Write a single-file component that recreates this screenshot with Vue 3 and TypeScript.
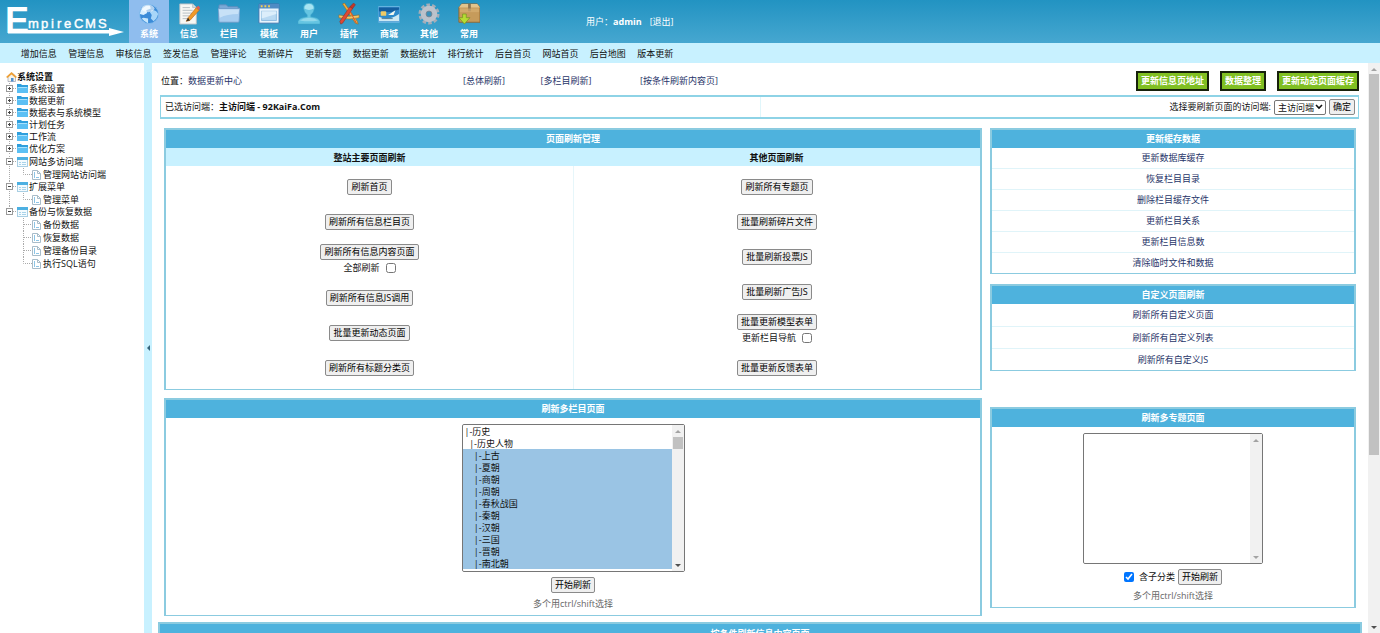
<script setup lang="ts">
import { ref } from 'vue'

interface TreeRow {
  text: string
  kind: 'closed' | 'open' | 'leaf'
  trunk: boolean
  last?: boolean
}

interface Action {
  text: string
  option?: string
}

const tabs = ['系统', '信息', '栏目', '模板', '用户', '插件', '商城', '其他', '常用']
const activeTab = ref(0)

const quickLinks = [
  '增加信息', '管理信息', '审核信息', '签发信息', '管理评论', '更新碎片', '更新专题',
  '数据更新', '数据统计', '排行统计', '后台首页', '网站首页', '后台地图', '版本更新',
]

const tree: TreeRow[] = [
  { text: '系统设置', kind: 'closed', trunk: true },
  { text: '数据更新', kind: 'closed', trunk: true },
  { text: '数据表与系统模型', kind: 'closed', trunk: true },
  { text: '计划任务', kind: 'closed', trunk: true },
  { text: '工作流', kind: 'closed', trunk: true },
  { text: '优化方案', kind: 'closed', trunk: true },
  { text: '网站多访问端', kind: 'open', trunk: true },
  { text: '管理网站访问端', kind: 'leaf', trunk: true, last: true },
  { text: '扩展菜单', kind: 'open', trunk: true },
  { text: '管理菜单', kind: 'leaf', trunk: true, last: true },
  { text: '备份与恢复数据', kind: 'open', trunk: false },
  { text: '备份数据', kind: 'leaf', trunk: false },
  { text: '恢复数据', kind: 'leaf', trunk: false },
  { text: '管理备份目录', kind: 'leaf', trunk: false },
  { text: '执行SQL语句', kind: 'leaf', trunk: false, last: true },
]

const siteActions: Action[] = [
  { text: '刷新首页' },
  { text: '刷新所有信息栏目页' },
  { text: '刷新所有信息内容页面', option: '全部刷新' },
  { text: '刷新所有信息JS调用' },
  { text: '批量更新动态页面' },
  { text: '刷新所有标题分类页' },
]

const otherActions: Action[] = [
  { text: '刷新所有专题页' },
  { text: '批量刷新碎片文件' },
  { text: '批量刷新投票JS' },
  { text: '批量刷新广告JS' },
  { text: '批量更新模型表单', option: '更新栏目导航' },
  { text: '批量更新反馈表单' },
]

const cacheLinks = ['更新数据库缓存', '恢复栏目目录', '删除栏目缓存文件', '更新栏目关系', '更新栏目信息数', '清除临时文件和数据']
const customLinks = ['刷新所有自定义页面', '刷新所有自定义列表', '刷新所有自定义JS']

const pad = '\u00a0\u00a0'
const columns = [
  '|-历史',
  pad + '|-历史人物',
  ...['上古', '夏朝', '商朝', '周朝', '春秋战国', '秦朝', '汉朝', '三国', '晋朝', '南北朝'].map((n) => pad + pad + '|-' + n),
]
const chosen = ref<string[]>(columns.slice(2))
const topics = ref<string[]>([])
const withChildren = ref(true)
</script>

<template>
  <div class="app">
    <header class="top">
      <svg class="logo" viewBox="0 0 129 43" role="img" aria-label="EmpireCMS">
        <text x="5" y="33" class="logo-cap">E</text>
        <text x="28 41 51 57 64 74 85 98" y="28" class="logo-rest">mpireCMS</text>
        <path d="M8 30H109V28L124 32L109 36V33.500H8Z" fill="#fff" />
      </svg>
      <nav class="tabs">
        <button v-for="(tab, i) in tabs" :key="tab" type="button" class="tab" :class="{ active: i === activeTab }" @click="activeTab = i">
          <svg class="tab-icon" viewBox="0 0 24 24" aria-hidden="true">
            <g v-if="i === 0">
              <circle cx="12" cy="12" r="10.5" fill="#3b8bd8" stroke="#86bdee" />
              <path d="M3 8Q7 2 13 3L14 6L9 8L10 11L6 13L2 12Z" fill="#d9efff" />
              <path d="M15 8Q20 7 22 12L20 17L17 20L14 17L15 13L13 10Z" fill="#a8d6f8" />
              <path d="M6 16L11 17L11 22Q7 21 4 17Z" fill="#c6e6fc" />
              <ellipse cx="11" cy="6" rx="7" ry="4" fill="#fff" opacity=".6" />
            </g>
            <g v-else-if="i === 1">
              <path d="M2 1H16L20 5V23H2Z" fill="#f7f7f4" stroke="#b8c0c4" />
              <path d="M16 1V5H20" fill="#d5dbde" stroke="#b8c0c4" />
              <path d="M5 5H13M5 8H16M5 11H15M5 14H12M5 17H11" stroke="#b4bcc1" />
              <path d="M9 20L11 16L20 5L23 8L13 19Z" fill="#f09a28" stroke="#b8681c" stroke-width=".7" />
              <path d="M20 5L22 3L24 5L23 8Z" fill="#e25d55" />
              <path d="M9 20L11 16L13 19Z" fill="#35322d" />
            </g>
            <g v-else-if="i === 2">
              <path d="M1 3Q1 2 2 2H9L11 4H21Q22 4 22 5V19H1Z" fill="#7ca9d6" stroke="#5b8cbc" />
              <path d="M0 6H24L23 20Q23 21 22 21H2Q1 21 1 20Z" fill="#a7cdf0" stroke="#6c9bc8" />
              <path d="M1 7H23L22 12Q10 12 2 16Z" fill="#d0e6f9" opacity=".8" />
            </g>
            <g v-else-if="i === 3">
              <rect x="1" y="1" width="22" height="21" rx="1" fill="#e9f4fd" stroke="#3e73ad" />
              <rect x="1" y="1" width="22" height="5" fill="#4f8bc4" />
              <path d="M3 3.5H5M7 3.5H9M11 3.5H13" stroke="#f4cf53" stroke-width="2" />
              <rect x="4" y="9" width="16" height="10" fill="#b9d9f2" stroke="#8ab9de" />
              <path d="M4 9H20V12L4 17Z" fill="#dceefb" />
            </g>
            <g v-else-if="i === 4">
              <path d="M12 0Q18 0 18 6Q17 11 14 13V15Q23 16 24 20V23H0V20Q1 16 10 15V13Q7 11 6 6Q6 0 12 0Z" fill="#65c5e2" stroke="#3aa5c8" stroke-width=".6" />
              <path d="M12 1Q17 1 17 6Q12 9 7 6Q7 1 12 1Z" fill="#a7e4f2" />
              <path d="M2 19Q6 16 12 16Q18 16 22 19Q12 21 2 19Z" fill="#93d9eb" />
            </g>
            <g v-else-if="i === 5">
              <path d="M5 1L7 0L21 20L22 23L19 22Z" fill="#f2b23c" stroke="#9b611d" stroke-width=".6" />
              <path d="M1 13Q12 16 23 13V16Q12 19 1 16Z" fill="#f3c765" stroke="#9b611d" stroke-width=".6" />
              <path d="M3 23L2 20L13 4L16 6L5 22Z" fill="#dd4935" stroke="#8f2d20" stroke-width=".6" />
              <path d="M13 4L17 0L19 2L16 6Z" fill="#c43527" stroke="#792b25" stroke-width=".5" />
              <path d="M11 5L20 22" stroke="#d84931" />
            </g>
            <g v-else-if="i === 6">
              <rect x="0" y="4" width="24" height="17" rx="1" fill="#2e8acb" stroke="#75bce7" />
              <path d="M1 15Q11 20 23 12V20H1Z" fill="#cde8f3" />
              <path d="M1 5H23V7Q11 12 1 9Z" fill="#145e9f" />
              <rect x="3" y="9" width="6" height="5" rx="1" fill="#efca65" />
              <path d="M11 13L19 8L17 13Z" fill="#f6f8ef" />
              <path d="M4 17H16" stroke="#4d7892" />
            </g>
            <g v-else-if="i === 7">
              <circle cx="12" cy="12" r="9.5" fill="none" stroke="#a5adb8" stroke-width="4" stroke-dasharray="3.7 2.27" />
              <circle cx="12" cy="12" r="6" fill="none" stroke="#bcc2cb" stroke-width="6" />
              <circle cx="12" cy="12" r="3.2" fill="#3a91bb" stroke="#7d8793" />
            </g>
            <g v-else>
              <path d="M1 5L4 1H21L24 5V21H1Z" fill="#c69b5b" stroke="#8c6733" />
              <path d="M1 5L4 1H21L24 5Z" fill="#e2c48d" />
              <path d="M11 1H14V9H11Z" fill="#8b7350" />
              <path d="M2 6H23V10H2Z" fill="#d8b276" opacity=".6" />
              <path d="M5 12H9V16H13L7 23L1 16H5Z" fill="#b6dc34" stroke="#6d921a" stroke-width=".7" />
            </g>
          </svg>
          <span>{{ tab }}</span>
        </button>
      </nav>
      <p class="user">用户：<b>admin</b><a href="#">[退出]</a></p>
    </header>

    <nav class="quick">
      <a v-for="link in quickLinks" :key="link" href="#">{{ link }}</a>
    </nav>

    <div class="body">
      <aside class="side">
        <div class="side-title">
          <svg class="home" viewBox="0 0 11 11" aria-hidden="true">
            <path d="M2 5V10.500H9.500V5L6 2Z" fill="#f8f4ea" stroke="#9a9fb0" stroke-width=".7" />
            <path d="M0 6L5.500 1L11 6L9.500 7L5.500 3.500L1.500 7Z" fill="#efa037" />
            <path d="M5 7H7.500V10.500H5Z" fill="#4e8fd0" />
          </svg>
          <b>系统设置</b>
        </div>
        <ul class="tree">
          <li v-for="row in tree" :key="row.kind + row.text" :class="row.kind">
            <svg v-if="row.kind !== 'leaf'" class="gutter" viewBox="0 0 17 12" aria-hidden="true">
              <path class="dots" :d="row.trunk ? 'M9.500 0V12M13 5.500H17' : 'M9.500 0V5M13 5.500H17'" />
              <rect x="6.500" y="2.500" width="6" height="6" fill="#fff" stroke="#9a9a9a" />
              <path :d="row.kind === 'closed' ? 'M8 5.500H11M9.500 4V7' : 'M8 5.500H11'" stroke="#444" />
            </svg>
            <svg v-else class="gutter-leaf" viewBox="0 0 32 13" aria-hidden="true">
              <path v-if="row.trunk" class="dots" d="M9.500 0V13" />
              <path class="dots" :d="row.last ? 'M23.500 0V6.500H32' : 'M23.500 0V13M24 6.500H32'" />
            </svg>
            <svg v-if="row.kind === 'closed'" class="node" viewBox="0 0 11 10" aria-hidden="true">
              <path d="M0 0H4L5 1H11V9H0Z" fill="#2f9fdd" />
              <path d="M0 3H11V9H0Z" fill="#5cc0f4" />
              <path d="M1 3.500H10" stroke="#a9e1fc" />
            </svg>
            <svg v-else-if="row.kind === 'open'" class="node" viewBox="0 0 11 10" aria-hidden="true">
              <rect x=".5" y=".5" width="10" height="9" fill="#f4fbff" stroke="#a9cfe3" />
              <path d="M0 1.500H11" stroke="#4db0e2" stroke-width="3" />
              <path d="M2 5.500H4M5 5.500H9M2 7.500H4M5 7.500H9" stroke="#a9d3e9" />
            </svg>
            <svg v-else class="page" viewBox="0 0 9 10" aria-hidden="true">
              <path d="M.5.5H5.500L8.500 3.500V9.500H.5Z" fill="#fff" stroke="#a8bcc9" />
              <path d="M5.500.5V3.500H8.500" fill="none" stroke="#a8bcc9" />
              <path d="M2.500 2V8M4 7.500H7" stroke="#8cc5e6" />
            </svg>
            <a href="#">{{ row.text }}</a>
          </li>
        </ul>
      </aside>

      <button class="splitter" type="button" aria-label="收起菜单"><i class="tri left"></i></button>

      <main class="main">
        <div class="crumb">
          <p class="where">位置：<a href="#">数据更新中心</a></p>
          <div class="jumps">
            <span>[<a href="#">总体刷新</a>]</span>
            <span>[<a href="#">多栏目刷新</a>]</span>
            <span>[<a href="#">按条件刷新内容页</a>]</span>
          </div>
          <div class="greens">
            <button type="button">更新信息页地址</button>
            <button type="button">数据整理</button>
            <button type="button">更新动态页面缓存</button>
          </div>
        </div>

        <form class="client" @submit.prevent>
          <p>已选访问端：<b>主访问端 - 92KaiFa.Com</b></p>
          <div class="client-pick">
            <label for="client">选择要刷新页面的访问端:</label>
            <select id="client"><option>主访问端</option></select>
            <button type="submit" class="btn">确定</button>
          </div>
        </form>

        <div class="grid">
          <div class="col">
            <section class="panel">
              <h2>页面刷新管理</h2>
              <div class="pair">
                <div v-for="(group, g) in [siteActions, otherActions]" :key="g" class="half">
                  <h3>{{ g === 0 ? '整站主要页面刷新' : '其他页面刷新' }}</h3>
                  <div class="actions">
                    <div v-for="a in group" :key="a.text" class="action" :class="{ tall: a.option }">
                      <button type="button" class="btn">{{ a.text }}</button>
                      <label v-if="a.option">{{ a.option }}<input type="checkbox" /></label>
                    </div>
                  </div>
                </div>
              </div>
            </section>

            <section class="panel">
              <h2>刷新多栏目页面</h2>
              <form class="lister" @submit.prevent>
                <div class="list wide">
                  <select v-model="chosen" multiple aria-label="栏目">
                    <option v-for="c in columns" :key="c" :value="c">{{ c }}</option>
                  </select>
                  <div class="bar"><i class="tri up dim"></i><i class="thumb short"></i><i class="tri down"></i></div>
                </div>
                <div class="go"><button type="submit" class="btn">开始刷新</button></div>
                <p class="hint">多个用ctrl/shift选择</p>
              </form>
            </section>
          </div>

          <div class="col right">
            <section class="panel">
              <h2>更新缓存数据</h2>
              <ul class="links">
                <li v-for="l in cacheLinks" :key="l"><a href="#">{{ l }}</a></li>
              </ul>
            </section>
            <section class="panel">
              <h2>自定义页面刷新</h2>
              <ul class="links loose">
                <li v-for="l in customLinks" :key="l"><a href="#">{{ l }}</a></li>
              </ul>
            </section>
            <section class="panel apart">
              <h2>刷新多专题页面</h2>
              <form class="lister" @submit.prevent>
                <div class="list small">
                  <select v-model="topics" multiple aria-label="专题"></select>
                  <div class="bar"><i class="tri up dim"></i><i class="tri down dim"></i></div>
                </div>
                <div class="go">
                  <label><input v-model="withChildren" type="checkbox" />含子分类</label>
                  <button type="submit" class="btn">开始刷新</button>
                </div>
                <p class="hint">多个用ctrl/shift选择</p>
              </form>
            </section>
          </div>
        </div>

        <section class="panel bottom">
          <h2>按条件刷新信息内容页面</h2>
        </section>
      </main>

      <div class="bar page-bar"><i class="tri up dim"></i><i class="thumb long"></i><i class="tri down"></i></div>
    </div>
  </div>
</template>

<style>
body {
  margin: 0;
  overflow: hidden;
}
</style>

<style scoped>
.app {
  display: flex;
  flex-direction: column;
  height: 100vh;
  overflow: hidden;
  background: #fff;
  color: #111;
  font: 9px/12px "Open Sans", "Noto Sans CJK SC", sans-serif;
}
.app * { box-sizing: border-box; }
p, h2, h3, ul { margin: 0; padding: 0; }
ul { list-style: none; }
h2, h3 { font-size: 9px; font-weight: 700; text-align: center; }
a { color: #1f3468; text-decoration: none; }
button, select, input { font: inherit; color: inherit; margin: 0; }

.top {
  display: flex;
  flex: none;
  height: 43px;
  background: linear-gradient(#2293c2, #46a7d0);
  color: #fff;
}
.logo { flex: none; width: 129px; height: 43px; }
.logo text { fill: #fff; font-family: "Liberation Sans", Arial, sans-serif; font-weight: 700; }
.logo .logo-cap { font-size: 36px; }
.logo .logo-rest { font-size: 13px; font-weight: 400; stroke: #fff; stroke-width: .4px; }
.tabs { display: flex; }
.tab {
  display: flex;
  flex-direction: column;
  align-items: center;
  gap: 3px;
  width: 40px;
  padding: 3px 0 0;
  border: 0;
  background: none;
  font-weight: 700;
}
.tab.active { background: #8fbdee; }
.tab-icon { width: 22px; height: 22px; }
.user { margin-left: 97px; line-height: 44px; }
.user b { margin-right: 8px; }
.user a { color: #fff; }

.quick {
  display: grid;
  grid-template-columns: repeat(14, 1fr);
  flex: none;
  width: 100%;
  height: 20px;
  padding: 0 701px 0 15px;
  background: #c8f1ff;
  line-height: 22px;
  text-align: center;
  white-space: nowrap;
}
.quick a { color: #111; }

.body { display: flex; flex: 1; min-height: 0; }
.side { flex: none; width: 144px; padding-top: 7px; }
.side-title { display: flex; align-items: center; height: 13px; padding-left: 6px; }
.home { width: 11px; height: 11px; }
.tree li { display: flex; align-items: center; height: 12px; white-space: nowrap; }
.tree li.leaf { height: 13px; }
.tree li.closed + li.open { margin-top: 1px; }
.tree a { color: #111; margin-left: 1px; }
.gutter { flex: none; width: 17px; height: 12px; }
.gutter-leaf { flex: none; width: 32px; height: 13px; }
.dots { fill: none; stroke: #aaa; stroke-dasharray: 1 1; }
.node { width: 11px; height: 10px; }
.page { width: 9px; height: 10px; margin-right: 1px; }

.splitter {
  display: flex;
  flex: none;
  align-items: center;
  justify-content: center;
  width: 8px;
  padding: 0;
  border: 0;
  background: #c8f1ff;
}
.tri { width: 0; height: 0; border: 3px solid transparent; }
.tri.left { border-left: 0; border-right-color: #34647c; }
.tri.up { border-top: 0; border-bottom-color: #505050; }
.tri.down { border-bottom: 0; border-top-color: #505050; }
.tri.up.dim { border-bottom-color: #a3a3a3; }
.tri.down.dim { border-top-color: #a3a3a3; }

.main { flex: 1; min-width: 0; overflow: hidden; }
.crumb { display: flex; align-items: center; height: 20px; margin: 8px 9px 4px; }
.where { width: 282px; }
.jumps { display: grid; grid-template-columns: 82px 82px 144px; text-align: center; color: #1f3468; }
.greens { display: flex; gap: 11px; margin-left: auto; }
.greens button {
  height: 20px;
  padding: 0 3px;
  border: 2px solid #17210b;
  background: #80bf22;
  color: #fff;
  font-weight: 700;
  line-height: 16px;
}
.client {
  display: flex;
  align-items: center;
  height: 24px;
  margin: 0 9px 0 8px;
  border: 1px solid #8ed3e6;
  border-width: 2px 1px;
}
.client p { flex: 1; padding-left: 4px; }
.client-pick {
  display: flex;
  flex: 1;
  align-items: center;
  justify-content: flex-end;
  gap: 3px;
  height: 100%;
  padding-right: 3px;
  border-left: 1px solid #e0f6fb;
}
.client-pick select {
  appearance: none;
  width: 52px;
  height: 15px;
  padding: 0 0 0 3px;
  border: 1px solid #767676;
  border-radius: 2px;
  background: #fff url("data:image/svg+xml,%3Csvg xmlns='http://www.w3.org/2000/svg' viewBox='0 0 8 6'%3E%3Cpath d='M1 1L4 4L7 1' fill='none' stroke='%23111' stroke-width='1.6'/%3E%3C/svg%3E") no-repeat right 2px center / 8px 6px;
  line-height: 13px;
}
.btn {
  height: 16px;
  padding: 0 3px;
  border: 1px solid #8a8a8a;
  border-radius: 2px;
  background: #efefef;
  color: #000;
  line-height: 14px;
  white-space: nowrap;
}

.grid {
  display: grid;
  grid-template-columns: 818fr 366fr;
  gap: 8px;
  margin: 9px 12px 6px;
}
.col { display: flex; flex-direction: column; gap: 8px; }
.col.right { gap: 10px; }
.panel { border: 2px solid #8bcbe0; border-bottom-width: 1px; }
.panel.apart { margin-top: 26px; }
.panel.bottom { margin: 0 6px; }
.panel h2 { height: 18px; background: #4eb2dd; color: #fff; line-height: 18px; }
.panel.bottom h2 { height: 20px; line-height: 20px; }
.pair { display: flex; }
.half { flex: 1; }
.half h3 { height: 18px; background: #c8f1ff; line-height: 19px; }
.actions { padding: 3px 0 4px; }
.half + .half .actions { border-left: 1px solid #e6f6fa; }
.action { display: flex; flex-direction: column; align-items: center; justify-content: center; height: 35px; }
.action.tall { height: 41px; }
label { display: inline-flex; align-items: center; height: 16px; }
input[type="checkbox"] { width: 10px; height: 10px; }
.action input { margin-left: 6px; }
.go input { margin-right: 5px; }

.links li { height: 21px; border-top: 1px solid #e0f4f9; line-height: 20px; text-align: center; }
.links li:first-child { height: 20px; border-top: 0; }
.links.loose li { height: 22px; line-height: 22px; }

.lister { display: flex; flex-direction: column; align-items: center; padding: 6px 0 5px; }
.list { display: flex; border: 1px solid #767676; border-radius: 2px; }
.list.wide { width: 223px; height: 148px; }
.list.small { width: 180px; height: 131px; }
.list select {
  flex: 1;
  min-width: 0;
  height: 100%;
  padding: 0;
  border: 0;
  outline: 0;
  background: #fff;
  overflow: hidden;
}
.list option { height: 12px; min-height: 12px; padding: 0 2px; line-height: 12px; color: #111; }
.list option:checked { background: linear-gradient(#9ac4e4, #9ac4e4); color: #111; }
.bar {
  display: flex;
  flex: none;
  flex-direction: column;
  align-items: center;
  justify-content: space-between;
  width: 12px;
  padding: 5px 0 4px;
  background: #f1f1f1;
}
.thumb { width: 10px; background: #c1c1c1; }
.thumb.short { height: 12px; margin: 4px 0 auto; }
.thumb.long { height: 68%; margin: 3px 0 auto; }
.go { display: flex; align-items: center; gap: 3px; padding: 5px 0; }
.hint { color: #666; }
</style>
